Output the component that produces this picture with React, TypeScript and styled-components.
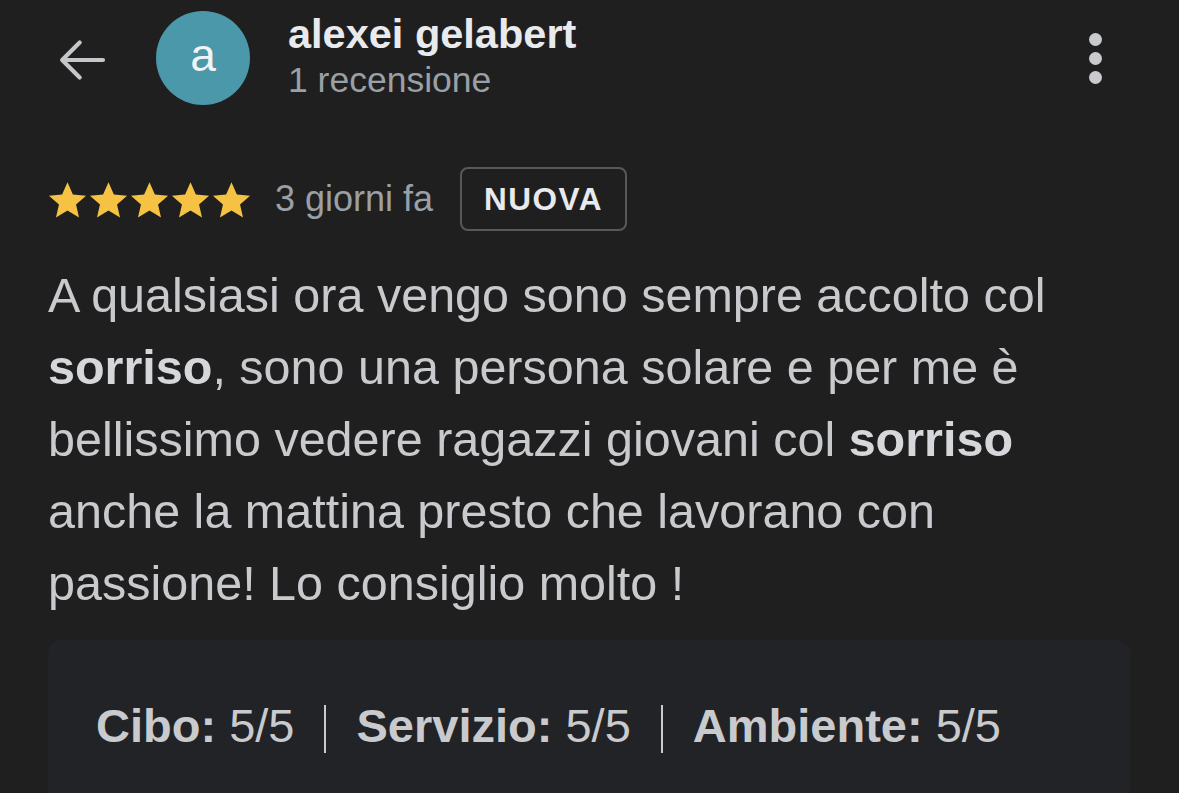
import styled, { createGlobalStyle } from "styled-components";

const GlobalStyle = createGlobalStyle`
  html, body {
    margin: 0;
    padding: 0;
    background: #1f1f1f;
  }
  body {
    font-family: "Liberation Sans", Arial, sans-serif;
    color: #c9cacd;
  }
`;

const Page = styled.div`
  width: 1179px;
  height: 793px;
  overflow: hidden;
  background: #1f1f1f;
  padding: 0 48px;
  box-sizing: border-box;
`;

const Header = styled.div`
  display: flex;
  align-items: center;
  height: 116px;
`;

const BackButton = styled.div`
  width: 66px;
  margin-left: 6px;
  margin-top: 4px;
  display: flex;
  align-items: center;
`;

const Avatar = styled.div`
  width: 94px;
  height: 94px;
  border-radius: 50%;
  background: #4a98aa;
  color: #f1f3f4;
  display: flex;
  align-items: center;
  justify-content: center;
  font-size: 46px;
  margin-left: 36px;
  padding-bottom: 6px;
  box-sizing: border-box;
`;

const Who = styled.div`
  flex: 1;
  margin-left: 38px;
  margin-top: -2px;
  display: flex;
  flex-direction: column;
`;

const Name = styled.div`
  font-weight: 700;
  font-size: 41.5px;
  color: #e8eaed;
  line-height: 46px;
`;

const Sub = styled.div`
  font-size: 35.5px;
  color: #9aa0a6;
  line-height: 46px;
`;

const MenuDots = styled.div`
  display: flex;
  flex-direction: column;
  gap: 6px;
  margin-right: 29px;
`;

const Dot = styled.span`
  width: 13px;
  height: 13px;
  border-radius: 50%;
  background: #c9cacd;
`;

const Meta = styled.div`
  display: flex;
  align-items: center;
  margin-top: 50px;
  height: 66px;
`;

const Stars = styled.div`
  display: flex;
  gap: 2px;
  margin-top: 2px;
`;

const When = styled.span`
  font-size: 36px;
  color: #9aa0a6;
  margin-left: 24px;
`;

const Badge = styled.span`
  margin-left: 27px;
  height: 64px;
  padding: 0 22px;
  box-sizing: border-box;
  display: flex;
  align-items: center;
  border: 2px solid #55585d;
  border-radius: 8px;
  font-size: 31.5px;
  font-weight: 700;
  letter-spacing: 1.5px;
  color: #e8eaed;
`;

const Body = styled.p`
  margin: 27px 0 0;
  font-size: 48.5px;
  line-height: 72px;
  color: #c9cacd;
  white-space: nowrap;

  b {
    font-weight: 700;
    color: #d6d7da;
  }
`;

const Card = styled.div`
  margin-top: 21px;
  width: 1082px;
  height: 200px;
  background: #222326;
  border-radius: 14px;
  padding: 58px 48px 0;
  box-sizing: border-box;
  display: flex;
  align-items: flex-start;
  font-size: 47px;
  color: #c9cacd;
`;

const Item = styled.span`
  b {
    font-weight: 700;
  }
`;

const Sep = styled.span`
  width: 2px;
  height: 48px;
  background: #c9cacd;
  margin: 7px 30px 0;
`;

function Star() {
  return (
    <svg width="39" height="39" viewBox="1.5 1.5 21 21">
      <path
        fill="#f6c243"
        d="M12 2.2l2.9 6.6 7.1.6-5.4 4.7 1.6 7-6.2-3.7-6.2 3.7 1.6-7L2 9.4l7.1-.6z"
      />
    </svg>
  );
}

export default function App() {
  return (
    <>
      <GlobalStyle />
      <Page>
        <Header>
          <BackButton>
            <svg width="56" height="56" viewBox="0 0 24 24" fill="none">
              <path
                d="M21 12H3.5M11 4.5L3.5 12l7.5 7.5"
                stroke="#c4c6ca"
                strokeWidth="1.8"
                strokeLinecap="round"
                strokeLinejoin="round"
              />
            </svg>
          </BackButton>
          <Avatar>a</Avatar>
          <Who>
            <Name>alexei gelabert</Name>
            <Sub>1 recensione</Sub>
          </Who>
          <MenuDots>
            <Dot />
            <Dot />
            <Dot />
          </MenuDots>
        </Header>
        <Meta>
          <Stars>
            {[0, 1, 2, 3, 4].map((i) => (
              <Star key={i} />
            ))}
          </Stars>
          <When>3 giorni fa</When>
          <Badge>NUOVA</Badge>
        </Meta>
        <Body>
          A qualsiasi ora vengo sono sempre accolto col
          <br />
          <b>sorriso</b>, sono una persona solare e per me è
          <br />
          bellissimo vedere ragazzi giovani col <b>sorriso</b>
          <br />
          anche la mattina presto che lavorano con
          <br />
          passione! Lo consiglio molto !
        </Body>
        <Card>
          <Item>
            <b>Cibo:</b> 5/5
          </Item>
          <Sep />
          <Item>
            <b>Servizio:</b> 5/5
          </Item>
          <Sep />
          <Item>
            <b>Ambiente:</b> 5/5
          </Item>
        </Card>
      </Page>
    </>
  );
}
